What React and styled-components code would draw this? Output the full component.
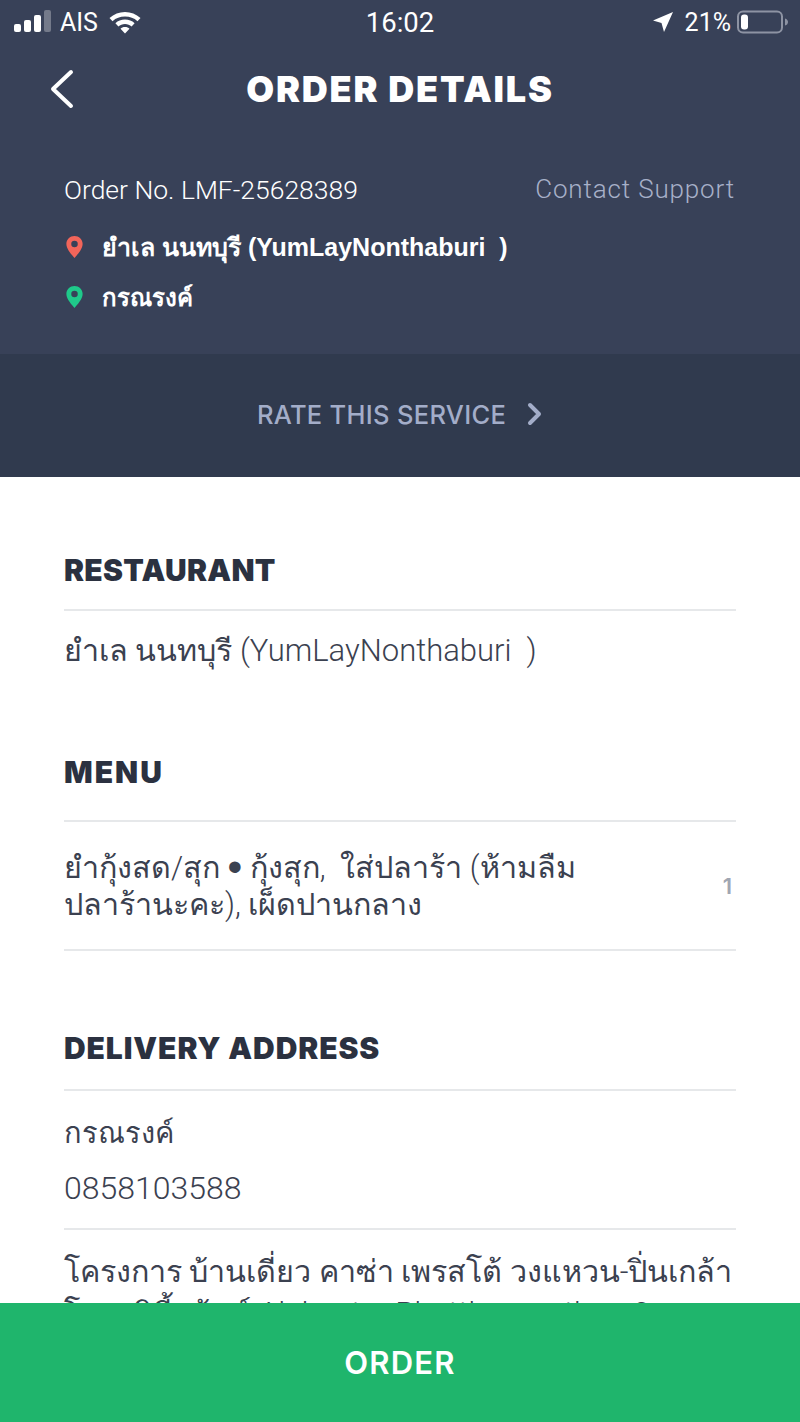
import React from "react";
import styled, { createGlobalStyle } from "styled-components";

const Global = createGlobalStyle`
  html, body { margin: 0; padding: 0; background: #fff; }
  * { box-sizing: border-box; }
`;
const sans = `"Liberation Sans", "Noto Sans", sans-serif`;
const light = `Roboto, "Liberation Sans", "Noto Sans", sans-serif`;
const heavy = `Inter, "Liberation Sans", sans-serif`;

const Page = styled.div`
  position: relative; width: 800px; height: 1422px; overflow: hidden; background: #fff;
  font-family: ${sans}; color: #2f3542;
`;
const Header = styled.header`
  background: #384158; height: 354px; display: flex; flex-direction: column; color: #fff;
`;
const StatusBar = styled.div`
  height: 44px; padding: 0 14px; display: grid; grid-template-columns: 1fr auto 1fr; align-items: center;
  font-family: ${light}; font-size: 25px;
`;
const StatusLeft = styled.div`display: flex; align-items: center; gap: 9px;`;
const StatusRight = styled.div`display: flex; align-items: center; justify-content: flex-end; gap: 10px; margin-right: -3px;`;
const Clock = styled.span`font-size: 27.5px;`;
const WifiIcon = styled.svg`margin-left: 2px;`;
const BatteryIcon = styled.svg`margin-left: -4px;`;
const ArrowIcon = styled.svg`margin-right: 2px;`;
const TitleRow = styled.div`
  position: relative; height: 90px; display: flex; align-items: center; justify-content: center;
`;
const BackIcon = styled.svg`position: absolute; left: 49px; top: 25px;`;
const Title = styled.h1`
  margin: 0; font-family: ${heavy}; font-size: 36px; font-weight: 900; letter-spacing: 1.8px;
`;
const Info = styled.div`padding: 39px 65px 0 64px; display: flex; flex-direction: column;`;
const OrderRow = styled.div`display: flex; justify-content: space-between; align-items: center; font-family: ${light}; font-weight: 300; font-size: 26.500px; height: 32px;`;
const Support = styled.span`color: #a7b0c8; font-size: 26px; letter-spacing: 0.85px;`;
const PlaceRow = styled.div`
  display: flex; align-items: center; gap: 19px; font-size: ${p => p.$size}px; font-weight: 700; height: 32px; margin-top: ${p => p.$gap}px;
  padding-left: 2px; white-space: pre-wrap;
`;
const RateBand = styled.div`
  height: 123px; padding-bottom: 3px; background: #303a4e; display: flex; align-items: center; justify-content: center; gap: 21px;
  color: #a3adc9; font-family: ${heavy}; font-size: 25.500px; font-weight: 500; letter-spacing: 0.3px;
`;
const Content = styled.main`padding: 0 64px;`;
const Section = styled.section`padding-top: ${p => p.$top}px;`;
const SectionTitle = styled.h2`
  margin: 0; height: ${p => p.$height}px; font-family: ${heavy}; font-size: 30px; line-height: 36px; font-weight: 900;
  letter-spacing: ${p => p.$spacing}px; color: #2b3140; border-bottom: 2px solid #e6e8ea;
`;
const Body = styled.div`font-family: ${light}; font-weight: 300; font-size: 30.500px; line-height: 37px; color: #3b4150; white-space: pre-wrap;`;
const Latin = styled.span`font-size: ${p => p.$size || 31}px;`;
const ShortThai = styled.span`font-size: 29px;`;
const Bullet = styled.span`font-family: ${sans}; font-size: 42px; line-height: 0; vertical-align: -3px;`;
const PlainRow = styled(Body)`padding-top: 21px; height: 60px;`;
const MenuRow = styled.div`
  display: flex; align-items: center; justify-content: space-between; height: 129px;
  border-bottom: 2px solid #e6e8ea; padding-right: 4px;
`;
const Qty = styled.span`font-family: ${heavy}; font-size: 22px; font-weight: 600; color: #a0a6b2;`;
const ContactBlock = styled.div`
  padding: 23px 0 0; height: 139px; border-bottom: 2px solid #e6e8ea; display: flex; flex-direction: column; gap: 18px;
`;
const Address = styled(Body)`padding-top: 21px; line-height: 42px;`;
const OrderButton = styled.button`
  position: absolute; left: 0; right: 0; bottom: 0; height: 119px; border: 0; background: #1fb56c; color: #fff;
  font-family: ${heavy}; font-size: 31px; font-weight: 600; letter-spacing: 1.200px;
`;

const Pin = ({ color }) => (
  <svg width="17" height="22" viewBox="0 0 17 23">
    <path fillRule="evenodd" fill={color} d="M8.5 0C3.8 0 0 3.7 0 8.3c0 5.4 6 11.6 8.5 14.7C11 19.9 17 13.7 17 8.3 17 3.7 13.2 0 8.5 0zm0 5a3.4 3.4 0 1 1 0 6.800a3.4 3.4 0 0 1 0-6.800z" />
  </svg>
);

export default function App() {
  return (
    <Page>
      <Global />
      <Header>
        <StatusBar>
          <StatusLeft>
            <svg width="37" height="24" viewBox="0 0 37 24">
              <rect x="0" y="14" width="7" height="8" rx="2" fill="#fff" />
              <rect x="10" y="10" width="7" height="12" rx="2" fill="#fff" />
              <rect x="20" y="5" width="7" height="17" rx="2" fill="#fff" />
              <rect x="30" y="0" width="7" height="22" rx="2" fill="#fff" opacity="0.3" />
            </svg>
            <span>AIS</span>
            <WifiIcon width="32" height="24" viewBox="0 0 32 24">
              <path fill="#fff" d="M16 2C10 2 5 4 0.500 8l3 3.200C7 8 11 6.500 16 6.500S25 8 28.500 11.200l3-3.200C27 4 22 2 16 2z" />
              <path fill="#fff" d="M16 9.500c-3.800 0-7 1.300-9.600 3.700l3 3.200c1.800-1.600 4-2.500 6.600-2.500s4.800.9 6.600 2.500l3-3.200C23 10.800 19.800 9.500 16 9.500z" />
              <path fill="#fff" d="M16 17c-1.900 0-3.400.6-4.500 1.700L16 23.500l4.500-4.800C19.400 17.600 17.900 17 16 17z" />
            </WifiIcon>
          </StatusLeft>
          <Clock>16:02</Clock>
          <StatusRight>
            <ArrowIcon width="20" height="20" viewBox="0 0 20 20"><path fill="#fff" d="M20 0L0 8.500l8.500 2.500 2.500 9z" /></ArrowIcon>
            <span>21%</span>
            <BatteryIcon width="52" height="24" viewBox="0 0 52 24">
              <rect x="1" y="1.500" width="44" height="21" rx="5" fill="none" stroke="#8d93a3" strokeWidth="2" />
              <rect x="4" y="4.500" width="7" height="15" rx="3" fill="#fff" />
              <path d="M48 8.500c2 .5 3 2 3 3.500s-1 3-3 3.500z" fill="#8d93a3" />
            </BatteryIcon>
          </StatusRight>
        </StatusBar>
        <TitleRow>
          <BackIcon width="26" height="40" viewBox="0 0 26 40">
            <path d="M22 3L4 20l18 17" fill="none" stroke="#fff" strokeWidth="4" strokeLinecap="round" strokeLinejoin="round" />
          </BackIcon>
          <Title>ORDER DETAILS</Title>
        </TitleRow>
        <Info>
          <OrderRow>
            <span>Order No. LMF-25628389</span>
            <Support>Contact Support</Support>
          </OrderRow>
          <PlaceRow $gap={26} $size={25}><Pin color="#f2655a" /><span>ยำเล นนทบุรี (YumLayNonthaburi  )</span></PlaceRow>
          <PlaceRow $gap={18} $size={24}><Pin color="#1fc98a" /><span>กรณรงค์</span></PlaceRow>
        </Info>
      </Header>
      <RateBand>
        <span>RATE THIS SERVICE</span>
        <svg width="16" height="24" viewBox="0 0 16 24">
          <path d="M3 3l9 9-9 9" fill="none" stroke="#a3adc9" strokeWidth="4" strokeLinecap="round" strokeLinejoin="round" />
        </svg>
      </RateBand>
      <Content>
        <Section $top={75}>
          <SectionTitle $height={59} $spacing={0.3}>RESTAURANT</SectionTitle>
          <PlainRow>ยำเล นนทบุรี <Latin>(YumLayNonthaburi  )</Latin></PlainRow>
        </Section>
        <Section $top={83}>
          <SectionTitle $height={68} $spacing={2}>MENU</SectionTitle>
          <MenuRow>
            <Body>ยำกุ้งสด/สุก <Bullet>•</Bullet> กุ้งสุก,  ใส่ปลาร้า (ห้ามลืม<br />ปลาร้านะคะ), เผ็ดปานกลาง</Body>
            <Qty>1</Qty>
          </MenuRow>
        </Section>
        <Section $top={79}>
          <SectionTitle $height={61} $spacing={0.9}>DELIVERY ADDRESS</SectionTitle>
          <ContactBlock>
            <Body><ShortThai>กรณรงค์</ShortThai></Body>
            <Body><Latin $size={32}>0858103588</Latin></Body>
          </ContactBlock>
          <Address>โครงการ บ้านเดี่ยว คาซ่า เพรสโต้ วงแหวน-ปิ่นเกล้า{"\n"}โครงซิตี้ เซ้นท์ <Latin>Alabaster Phutthamonthon 2</Latin> ถนน</Address>
        </Section>
      </Content>
      <OrderButton>ORDER</OrderButton>
    </Page>
  );
}
